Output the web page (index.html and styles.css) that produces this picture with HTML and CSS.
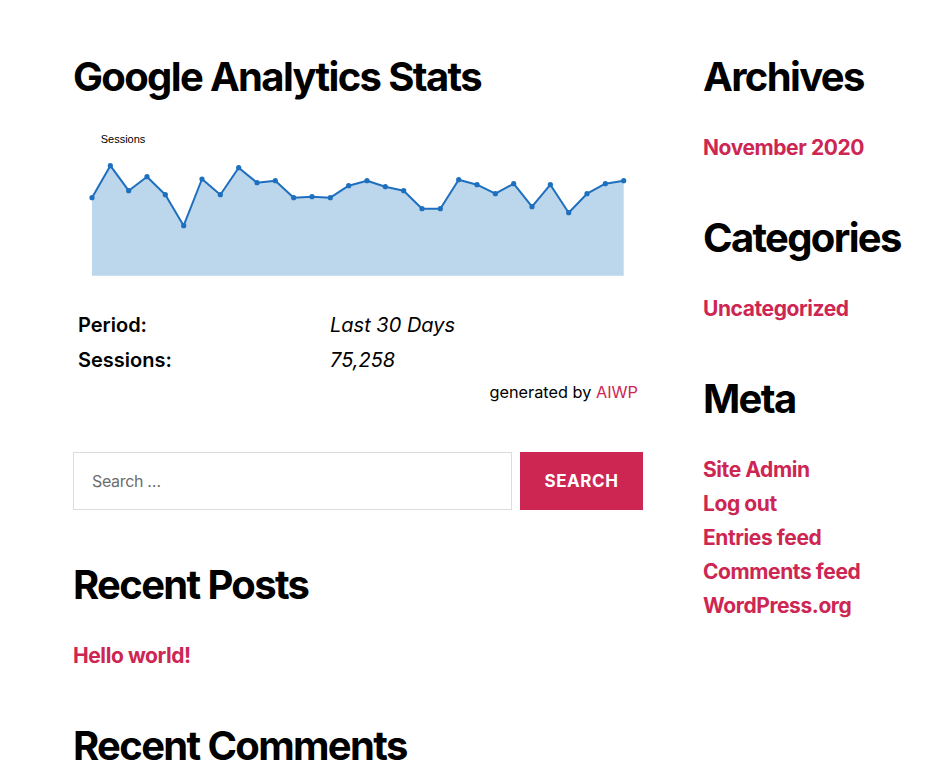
FILE: index.html
```html
<!DOCTYPE html>
<html lang="en">
<head>
<meta charset="utf-8">
<title>Widgets</title>
<link rel="stylesheet" href="styles.css">
</head>
<body>
<div class="page">
  <div class="col col-main">
    <section class="widget">
      <h2 class="widget-title">Google Analytics Stats</h2>
      <svg class="chart" width="570" height="170" viewBox="0 0 570 170">
        <text x="27.7" y="22.7" class="chart-label">Sessions</text>
        <polygon class="chart-area" points="19,155.7 19,77.7 37.33,45.7 55.67,70.7 74,56.7 92.34,74.7 110.67,105.7 129,59 147.34,74.7 165.67,47.7 184,62.7 202.34,60.7 220.67,77.7 239,76.7 257.34,77.7 275.68,65.7 294.01,60.7 312.34,66.7 330.68,70.7 349.01,88.7 367.34,88.7 385.68,59.7 404.01,64.7 422.35,73.7 440.68,63.7 459.01,86.7 477.35,64.7 495.68,92.7 514.01,73.7 532.35,63.7 550.68,60.7 550.68,155.7"/>
        <polyline class="chart-line" points="19,77.7 37.33,45.7 55.67,70.7 74,56.7 92.34,74.7 110.67,105.7 129,59 147.34,74.7 165.67,47.7 184,62.7 202.34,60.7 220.67,77.7 239,76.7 257.34,77.7 275.68,65.7 294.01,60.7 312.34,66.7 330.68,70.7 349.01,88.7 367.34,88.7 385.68,59.7 404.01,64.7 422.35,73.7 440.68,63.7 459.01,86.7 477.35,64.7 495.68,92.7 514.01,73.7 532.35,63.7 550.68,60.7"/>
        <g class="chart-dots">
          <circle cx="19" cy="77.7" r="2.6"/><circle cx="37.33" cy="45.7" r="2.6"/><circle cx="55.67" cy="70.7" r="2.6"/><circle cx="74" cy="56.7" r="2.6"/><circle cx="92.34" cy="74.7" r="2.6"/><circle cx="110.67" cy="105.7" r="2.6"/><circle cx="129" cy="59" r="2.6"/><circle cx="147.34" cy="74.7" r="2.6"/><circle cx="165.67" cy="47.7" r="2.6"/><circle cx="184" cy="62.7" r="2.6"/><circle cx="202.34" cy="60.7" r="2.6"/><circle cx="220.67" cy="77.7" r="2.6"/><circle cx="239" cy="76.7" r="2.6"/><circle cx="257.34" cy="77.7" r="2.6"/><circle cx="275.68" cy="65.7" r="2.6"/><circle cx="294.01" cy="60.7" r="2.6"/><circle cx="312.34" cy="66.7" r="2.6"/><circle cx="330.68" cy="70.7" r="2.6"/><circle cx="349.01" cy="88.7" r="2.6"/><circle cx="367.34" cy="88.7" r="2.6"/><circle cx="385.68" cy="59.7" r="2.6"/><circle cx="404.01" cy="64.7" r="2.6"/><circle cx="422.35" cy="73.7" r="2.6"/><circle cx="440.68" cy="63.7" r="2.6"/><circle cx="459.01" cy="86.7" r="2.6"/><circle cx="477.35" cy="64.7" r="2.6"/><circle cx="495.68" cy="92.7" r="2.6"/><circle cx="514.01" cy="73.7" r="2.6"/><circle cx="532.35" cy="63.7" r="2.6"/><circle cx="550.68" cy="60.7" r="2.6"/>
        </g>
      </svg>
      <table class="stats">
        <tr><td class="stat-key">Period:</td><td class="stat-val">Last 30 Days</td></tr>
        <tr><td class="stat-key">Sessions:</td><td class="stat-val">75,258</td></tr>
      </table>
      <p class="credit">generated by <a href="#">AIWP</a></p>
    </section>

    <section class="widget widget-search">
      <form class="search-form">
        <input class="search-field" type="search" placeholder="Search …">
        <button class="search-submit" type="button">Search</button>
      </form>
    </section>

    <section class="widget">
      <h2 class="widget-title">Recent Posts</h2>
      <ul class="links">
        <li><a href="#">Hello world!</a></li>
      </ul>
    </section>

    <section class="widget">
      <h2 class="widget-title">Recent Comments</h2>
    </section>
  </div>

  <div class="col col-side">
    <section class="widget">
      <h2 class="widget-title">Archives</h2>
      <ul class="links">
        <li><a href="#">November 2020</a></li>
      </ul>
    </section>
    <section class="widget">
      <h2 class="widget-title">Categories</h2>
      <ul class="links">
        <li><a href="#">Uncategorized</a></li>
      </ul>
    </section>
    <section class="widget">
      <h2 class="widget-title">Meta</h2>
      <ul class="links">
        <li><a href="#">Site Admin</a></li>
        <li><a href="#">Log out</a></li>
        <li><a href="#">Entries feed</a></li>
        <li><a href="#">Comments feed</a></li>
        <li><a href="#">WordPress.org</a></li>
      </ul>
    </section>
  </div>
</div>
</body>
</html>
```

FILE: styles.css
```css
html, body {
  margin: 0;
  padding: 0;
  background: #fff;
}

body {
  font-family: Inter, "Noto Sans", sans-serif;
  color: #000;
  overflow: hidden;
}

.page {
  display: grid;
  grid-template-columns: 570px 1fr;
  column-gap: 60px;
  padding: 52px 0 0 73px;
  align-items: start;
}

.col {
  display: flex;
  flex-direction: column;
}

.widget {
  margin: 0 0 48px;
}

.widget-search {
  margin-bottom: 50px;
}

.widget-title {
  margin: 0 0 29px;
  font-size: 40px;
  line-height: 50px;
  font-weight: 700;
  letter-spacing: -0.0415em;
  white-space: nowrap;
}

.links {
  list-style: none;
  margin: 0;
  padding: 0;
}

.links li {
  font-size: 21px;
  line-height: 34px;
  font-weight: 700;
  letter-spacing: -0.02em;
}

a {
  color: #cd2653;
  text-decoration: none;
}

/* chart */
.chart {
  display: block;
  margin-top: -11px;
}

.chart-label {
  font-family: "Liberation Sans", Arial, sans-serif;
  font-size: 11px;
  fill: #000;
}

.chart-area {
  fill: #bcd6eb;
}

.chart-line {
  fill: none;
  stroke: #1f6fbf;
  stroke-width: 2;
  stroke-linejoin: round;
}

.chart-dots {
  fill: #1f6fbf;
}

/* stats table */
.stats {
  border-collapse: collapse;
  margin-top: 18px;
  width: 570px;
}

.stats td {
  padding: 0 5px;
  font-size: 20px;
  line-height: 35px;
  vertical-align: top;
}

.stat-key {
  width: 242px;
  font-weight: 600;
}

.stat-val {
  font-style: italic;
  font-weight: 400;
}

.credit {
  margin: 2px 0 0;
  padding-right: 5px;
  text-align: right;
  font-size: 16.3px;
  line-height: 24px;
}

/* search */
.search-form {
  display: flex;
  gap: 8px;
  margin: 0;
}

.search-field {
  box-sizing: border-box;
  width: 439px;
  height: 58px;
  border: 1px solid #dcdcdc;
  border-radius: 0;
  padding: 0 18px;
  font-family: Inter, sans-serif;
  font-size: 16px;
  letter-spacing: -0.02em;
  color: #000;
  background: #fff;
  outline: none;
}

.search-field::placeholder {
  color: #6d6d6d;
}

.search-submit {
  box-sizing: border-box;
  width: 123px;
  height: 58px;
  border: 0;
  border-radius: 0;
  background: #cd2653;
  color: #fff;
  font-family: Inter, sans-serif;
  font-size: 17px;
  font-weight: 700;
  letter-spacing: 0.0333em;
  text-transform: uppercase;
  padding: 0;
}
```
